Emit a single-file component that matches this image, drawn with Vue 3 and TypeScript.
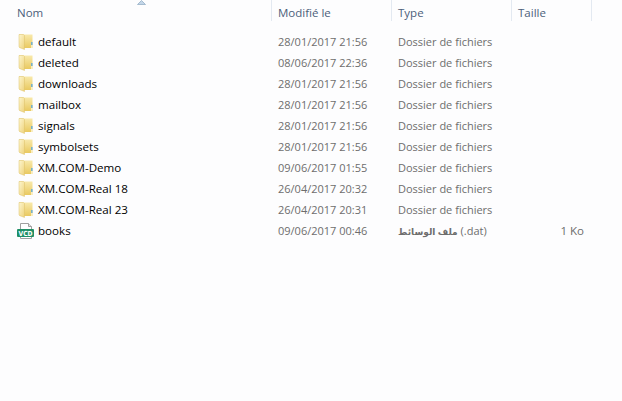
<template>
  <div class="explorer">
    <div class="list-header">
      <div class="col-head name-head">
        Nom
        <svg class="sort-arrow" width="9" height="5" viewBox="0 0 9 5"><path d="M0.5 4.5 L4.5 0.5 L8.5 4.5 Z" fill="#c3d6e8" stroke="#7d9db9" stroke-width="0.6"/></svg>
      </div>
      <div class="col-head">Modifié le</div>
      <div class="col-head">Type</div>
      <div class="col-head">Taille</div>
    </div>
    <div class="rows">
      <div v-for="f in files" :key="f.name" class="row">
        <div class="cell-name">
          <svg v-if="f.folder" class="icon" width="16" height="16" viewBox="0 0 16 16">
            <defs>
              <linearGradient id="folderBack" x1="0" y1="0" x2="0" y2="1">
                <stop offset="0" stop-color="#f8e9ab" />
                <stop offset="1" stop-color="#e9c960" />
              </linearGradient>
              <linearGradient id="folderFront" x1="0" y1="0" x2="1" y2="1">
                <stop offset="0" stop-color="#fdf6cf" />
                <stop offset="1" stop-color="#eed27a" />
              </linearGradient>
            </defs>
            <path d="M1 0.5 H14.5 V14 H3 L1 13 Z" fill="url(#folderBack)"/>
            <path d="M1 0.5 H5.5 L6.5 1.5 V15.5 L1.5 13.5 L1 12.5 Z" fill="url(#folderFront)" stroke="#dcc068" stroke-width="0.5"/>
            <path d="M13.2 8 H14.5 V11 H13.2 Z" fill="#5aa9dc"/>
            <path d="M13.2 11 H14.5 V14 H13.2 Z" fill="#fdf6d4"/>
          </svg>
          <svg v-else class="icon book" width="18" height="16" viewBox="-1 0 18 16">
            <path d="M2.5 0.5 H10.5 L13.5 3.5 V15.5 H2.5 Z" fill="#fff" stroke="#a0a0a0"/>
            <path d="M10.5 0.5 V3.5 H13.5" fill="#e4e4e4" stroke="#a0a0a0"/>
            <rect x="-1" y="6" width="17" height="8" rx="1" fill="#1f8f66"/>
            <text x="7.5" y="12.5" class="badge-text" text-anchor="middle" textLength="14" lengthAdjust="spacingAndGlyphs">VCD</text>
          </svg>
          <span class="file-name">{{ f.name }}</span>
        </div>
        <div class="cell">{{ f.date }}</div>
        <div class="cell">
          <span v-if="f.typeAr" class="type-ar">{{ f.typeAr }}</span>
          {{ f.type }}
        </div>
        <div class="cell size">{{ f.size }}</div>
      </div>
    </div>
  </div>
</template>

<script setup lang="ts">
interface FileRow {
  name: string
  date: string
  type: string
  typeAr?: string
  size: string
  folder: boolean
}

const DIR = 'Dossier de fichiers'

const files: FileRow[] = [
  { name: 'default', date: '28/01/2017 21:56', type: DIR, size: '', folder: true },
  { name: 'deleted', date: '08/06/2017 22:36', type: DIR, size: '', folder: true },
  { name: 'downloads', date: '28/01/2017 21:56', type: DIR, size: '', folder: true },
  { name: 'mailbox', date: '28/01/2017 21:56', type: DIR, size: '', folder: true },
  { name: 'signals', date: '28/01/2017 21:56', type: DIR, size: '', folder: true },
  { name: 'symbolsets', date: '28/01/2017 21:56', type: DIR, size: '', folder: true },
  { name: 'XM.COM-Demo', date: '09/06/2017 01:55', type: DIR, size: '', folder: true },
  { name: 'XM.COM-Real 18', date: '26/04/2017 20:32', type: DIR, size: '', folder: true },
  { name: 'XM.COM-Real 23', date: '26/04/2017 20:31', type: DIR, size: '', folder: true },
  { name: 'books', date: '09/06/2017 00:46', type: '(.dat)', typeAr: 'ملف الوسائط', size: '1 Ko', folder: false },
]
</script>

<style>
html,
body {
  background: #fff;
}
</style>

<style scoped>
.explorer {
  width: 622px;
  height: 401px;
  background: #fdfdfe;
  font-family: 'Open Sans', 'Noto Sans', 'DejaVu Sans', sans-serif;
  font-size: 11.5px;
  overflow: hidden;
}
.list-header {
  display: grid;
  grid-template-columns: 272px 120px 120px 80px;
  height: 21px;
}
.col-head {
  position: relative;
  padding: 4px 0 0 6px;
  border-right: 1px solid #e3e9f1;
  color: #4c607a;
  line-height: 17px;
}
.name-head {
  padding-left: 17px;
}
.sort-arrow {
  position: absolute;
  left: 137px;
  top: 0;
}
.rows {
  padding-top: 10px;
}
.row {
  display: grid;
  grid-template-columns: 272px 120px 120px 72px;
  height: 21px;
  align-items: center;
}
.cell-name {
  display: flex;
  align-items: center;
  gap: 4px;
  padding-left: 18px;
  color: #000;
  font-size: 11.6px;
}
.icon {
  flex: none;
}
.book {
  margin: 0 -1px;
}
.badge-text {
  font-family: 'DejaVu Sans', sans-serif;
  font-size: 7px;
  font-weight: 700;
  fill: #fff;
}
.cell {
  padding-left: 6px;
  color: #6d6d6d;
  font-size: 11px;
}
.type-ar {
  font-size: 9px;
  font-weight: 700;
}
.size {
  font-size: 11.5px;
  text-align: right;
}
</style>
